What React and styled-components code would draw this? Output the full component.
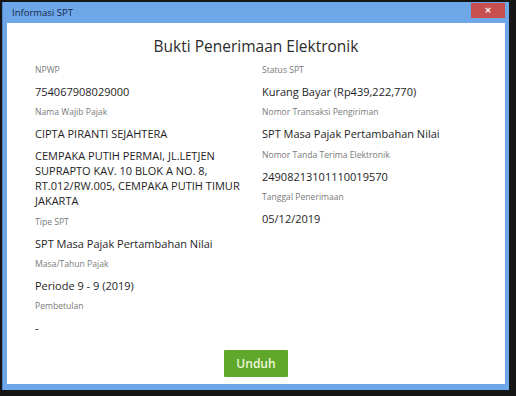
import React from 'react';
import styled, { createGlobalStyle } from 'styled-components';

const GlobalStyle = createGlobalStyle`
  html, body {
    margin: 0;
    padding: 0;
    background: #161616;
  }
  body {
    font-family: "Open Sans", "Noto Sans", sans-serif;
  }
`;

const Page = styled.div`
  width: 516px;
  height: 396px;
  box-sizing: border-box;
  padding: 2px 7px 6px 2px;
  display: flex;
`;

const Window = styled.div`
  flex: 1;
  display: flex;
  flex-direction: column;
  background: #6da7e8;
  padding: 0 4px 6px 5px;
  box-shadow: inset 1px 0 0 #4f86c9;
`;

const TitleBar = styled.div`
  height: 21px;
  display: flex;
  align-items: flex-start;
  justify-content: space-between;
  padding-left: 5px;
`;

const TitleText = styled.span`
  font-size: 9.5px;
  line-height: 21px;
  color: #17284a;
`;

const CloseButton = styled.button`
  margin-top: 1px;
  width: 34px;
  height: 15px;
  border: none;
  padding: 0;
  background: #c74f4f;
  color: #fff;
  font-family: "DejaVu Sans", sans-serif;
  font-size: 9px;
  font-weight: 700;
  line-height: 15px;
`;

const Body = styled.div`
  flex: 1;
  background: #fff;
  display: flex;
  flex-direction: column;
  padding: 11px 0 7px;
`;

const Heading = styled.h1`
  margin: 0 0 2px;
  text-align: center;
  font-size: 15.5px;
  line-height: 24px;
  font-weight: 400;
  color: #2b2b2b;
`;

const Columns = styled.div`
  display: grid;
  grid-template-columns: 227px 1fr;
  padding-left: 28px;
`;

const Column = styled.div`
  display: flex;
  flex-direction: column;
`;

const Label = styled.div`
  font-size: 8.6px;
  line-height: 21px;
  color: #7a7a7a;
`;

const Value = styled.div`
  font-size: 11px;
  line-height: 15.3px;
  margin: 3px 0;
  color: #1e1e1e;
  max-width: ${(p) => p.$wrap || 'none'};
`;

const Footer = styled.div`
  margin-top: auto;
  display: flex;
  justify-content: center;
`;

const DownloadButton = styled.button`
  width: 64px;
  height: 27px;
  border: none;
  background: #5fa82b;
  color: #eef7dc;
  font-family: "Open Sans", sans-serif;
  font-size: 12px;
  font-weight: 600;
  border-radius: 1px;
`;

const left = [
  { label: 'NPWP', values: ['754067908029000'] },
  {
    label: 'Nama Wajib Pajak',
    values: [
      'CIPTA PIRANTI SEJAHTERA',
      'CEMPAKA PUTIH PERMAI, JL.LETJEN SUPRAPTO KAV. 10 BLOK A NO. 8, RT.012/RW.005, CEMPAKA PUTIH TIMUR JAKARTA',
    ],
  },
  { label: 'Tipe SPT', values: ['SPT Masa Pajak Pertambahan Nilai'] },
  { label: 'Masa/Tahun Pajak', values: ['Periode 9 - 9 (2019)'] },
  { label: 'Pembetulan', values: ['-'] },
];

const right = [
  { label: 'Status SPT', values: ['Kurang Bayar (Rp439,222,770)'] },
  { label: 'Nomor Transaksi Pengiriman', values: ['SPT Masa Pajak Pertambahan Nilai'] },
  { label: 'Nomor Tanda Terima Elektronik', values: ['24908213101110019570'] },
  { label: 'Tanggal Penerimaan', values: ['05/12/2019'] },
];

const Fields = ({ items }) => (
  <Column>
    {items.map((item) => (
      <React.Fragment key={item.label}>
        <Label>{item.label}</Label>
        {item.values.map((v) => (
          <Value key={v} $wrap="216px">
            {v}
          </Value>
        ))}
      </React.Fragment>
    ))}
  </Column>
);

export default function App() {
  return (
    <>
      <GlobalStyle />
      <Page>
        <Window>
          <TitleBar>
            <TitleText>Informasi SPT</TitleText>
            <CloseButton>×</CloseButton>
          </TitleBar>
          <Body>
            <Heading>Bukti Penerimaan Elektronik</Heading>
            <Columns>
              <Fields items={left} />
              <Fields items={right} />
            </Columns>
            <Footer>
              <DownloadButton>Unduh</DownloadButton>
            </Footer>
          </Body>
        </Window>
      </Page>
    </>
  );
}
